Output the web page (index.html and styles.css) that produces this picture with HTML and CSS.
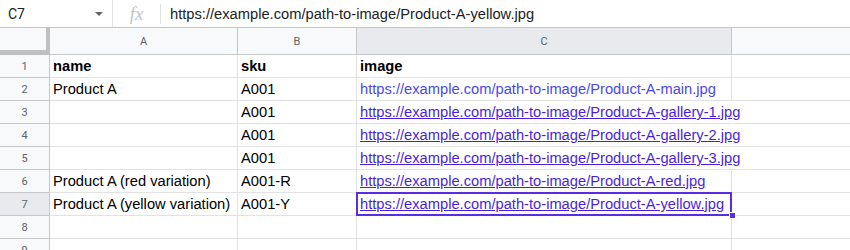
FILE: index.html
```html
<!DOCTYPE html>
<html>
<head>
<meta charset="utf-8">
<link rel="stylesheet" href="styles.css">
</head>
<body>
<div class="fbar">
  <div class="namebox"><span class="ref">C7</span><span class="caret"></span></div>
  <div class="fx">fx</div>
  <div class="formula">https://example.com/path-to-image/Product-A-yellow.jpg</div>
</div>
<div class="sheet">
  <div class="ch corner"></div>
  <div class="ch">A</div>
  <div class="ch">B</div>
  <div class="ch sel">C</div>
  <div class="ch last"></div>

  <div class="rh">1</div>
  <div class="c b">name</div>
  <div class="c b">sku</div>
  <div class="c b">image</div>
  <div class="c last"></div>

  <div class="rh">2</div>
  <div class="c">Product A</div>
  <div class="c">A001</div>
  <div class="c"><span class="lnk plain">https://example.com/path-to-image/Product-A-main.jpg</span></div>
  <div class="c last"></div>

  <div class="rh">3</div>
  <div class="c"></div>
  <div class="c">A001</div>
  <div class="c spill"><span class="lnk">https://example.com/path-to-image/Product-A-gallery-1.jpg</span></div>
  <div class="c last"></div>

  <div class="rh">4</div>
  <div class="c"></div>
  <div class="c">A001</div>
  <div class="c spill"><span class="lnk">https://example.com/path-to-image/Product-A-gallery-2.jpg</span></div>
  <div class="c last"></div>

  <div class="rh">5</div>
  <div class="c"></div>
  <div class="c">A001</div>
  <div class="c spill"><span class="lnk">https://example.com/path-to-image/Product-A-gallery-3.jpg</span></div>
  <div class="c last"></div>

  <div class="rh">6</div>
  <div class="c">Product A (red variation)</div>
  <div class="c">A001-R</div>
  <div class="c"><span class="lnk">https://example.com/path-to-image/Product-A-red.jpg</span></div>
  <div class="c last"></div>

  <div class="rh selr">7</div>
  <div class="c">Product A (yellow variation)</div>
  <div class="c">A001-Y</div>
  <div class="c active"><span class="lnk">https://example.com/path-to-image/Product-A-yellow.jpg</span><span class="handle"></span></div>
  <div class="c last"></div>

  <div class="rh">8</div>
  <div class="c"></div>
  <div class="c"></div>
  <div class="c"></div>
  <div class="c last"></div>

  <div class="rh">9</div>
  <div class="c"></div>
  <div class="c"></div>
  <div class="c"></div>
  <div class="c last"></div>
</div>
</body>
</html>
```

FILE: styles.css
```css
* { box-sizing: border-box; }
body {
  margin: 0;
  background: #fff;
  font-family: "Liberation Sans", Arial, sans-serif;
  overflow: hidden;
  width: 850px;
  height: 250px;
}
.fbar {
  height: 28px;
  display: flex;
  align-items: center;
  border-bottom: 1px solid #c7c7c7;
  background: #fff;
}
.namebox {
  width: 113px;
  height: 27px;
  display: flex;
  align-items: center;
  justify-content: space-between;
  padding: 0 8px 0 8px;
  border-right: 1px solid #e0e0e0;
}
.ref {
  font-family: Roboto, "Liberation Sans", sans-serif;
  font-size: 14px;
  color: #202124;
}
.caret {
  width: 0;
  height: 0;
  border-left: 4px solid transparent;
  border-right: 4px solid transparent;
  border-top: 4px solid #5f6368;
  margin-right: 1px;
}
.fx {
  width: 48px;
  height: 20px;
  display: flex;
  align-items: center;
  justify-content: center;
  font-family: "Liberation Serif", serif;
  font-style: italic;
  font-size: 19px;
  color: #c4c4c4;
  border-right: 1px solid #e0e0e0;
  line-height: 1;
}
.formula {
  padding-left: 9px;
  font-size: 14.7px;
  color: #202124;
  white-space: nowrap;
}
.sheet {
  display: grid;
  grid-template-columns: 50px 188px 119px 375px 1fr;
  grid-template-rows: 27px repeat(9, 23px);
}
.ch {
  background: #f8f9fa;
  border-right: 1px solid #c7c7c7;
  border-bottom: 1px solid #c7c7c7;
  display: flex;
  align-items: center;
  justify-content: center;
  font-family: Roboto, "Liberation Sans", sans-serif;
  font-size: 11px;
  color: #5f6368;
}
.ch.sel { background: #e8eaed; }
.ch.last { border-right: none; }
.ch.corner {
  border-right: 4px solid #c0c0c0;
  border-bottom: 4px solid #c0c0c0;
  box-shadow: inset 0 -1px 0 #c0c0c0;
}
.rh {
  background: #f8f9fa;
  border-right: 1px solid #c7c7c7;
  border-bottom: 1px solid #c7c7c7;
  display: flex;
  align-items: center;
  justify-content: center;
  font-family: Roboto, "Liberation Sans", sans-serif;
  font-size: 11px;
  color: #5f6368;
}
.rh.selr { background: #e8eaed; }
.c {
  border-right: 1px solid #e2e2e2;
  border-bottom: 1px solid #e2e2e2;
  padding: 0 3px;
  display: flex;
  align-items: center;
  font-size: 14.7px;
  color: #000;
  white-space: nowrap;
  overflow: hidden;
  position: relative;
}
.c.b { font-weight: bold; }
.c.last { border-right: none; }
.c.spill {
  overflow: visible;
  border-right-color: transparent;
  z-index: 1;
}
.lnk {
  color: #4a1fdb;
  text-decoration: underline;
  text-underline-offset: 1px;
}
.lnk.plain {
  color: #4848ee;
  text-decoration: none;
}
.c.active {
  overflow: visible;
  z-index: 2;
}
.c.active::after {
  content: "";
  position: absolute;
  left: -1px;
  top: -1px;
  right: -1px;
  bottom: -1px;
  border: 2px solid #5b2ce6;
  pointer-events: none;
}
.handle {
  position: absolute;
  right: -5px;
  bottom: -4px;
  width: 7px;
  height: 7px;
  background: #5b2ce6;
  border: 1px solid #fff;
  z-index: 3;
}
```
